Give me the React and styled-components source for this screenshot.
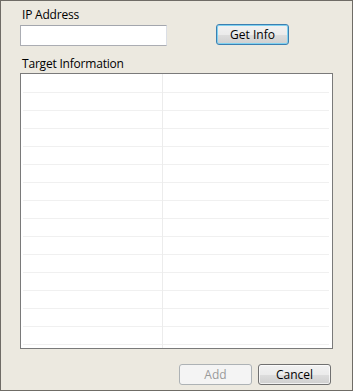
import styled, { createGlobalStyle } from "styled-components";

const Global = createGlobalStyle`
  html, body {
    margin: 0;
    padding: 0;
    background: #ece9e0;
  }
`;

const ROWS = 16;

export default function App() {
  return (
    <>
      <Global />
      <Window>
        <Label>IP Address</Label>
        <InputRow>
          <TextBox />
          <Button $default>Get Info</Button>
        </InputRow>
        <Label $gap>Target Information</Label>
        <Table>
          <Divider />
          {Array.from({ length: ROWS }).map((_, i) => (
            <Row key={i}>
              <Cell />
              <Cell />
            </Row>
          ))}
        </Table>
        <Footer>
          <Button disabled>Add</Button>
          <Button>Cancel</Button>
        </Footer>
      </Window>
    </>
  );
}

const Window = styled.div`
  width: 353px;
  height: 391px;
  box-sizing: border-box;
  border: 1px solid #6f6c66;
  background: #ece9e0;
  padding: 6px 20px 0 19px;
  display: flex;
  flex-direction: column;
  font-family: "Open Sans", "Noto Sans", sans-serif;
  font-size: 12px;
  color: #000;
`;

const Label = styled.div`
  padding-left: 2px;
  line-height: 16px;
  height: 16px;
  margin-top: ${(p) => (p.$gap ? "10px" : "0")};
  letter-spacing: -0.2px;
`;

const InputRow = styled.div`
  display: flex;
  align-items: flex-start;
  gap: 49px;
  margin-top: 2px;
`;

const TextBox = styled.div`
  width: 147px;
  height: 21px;
  box-sizing: border-box;
  background: #fff;
  border: 1px solid #abadb3;
  border-top-color: #a3a6ad;
  border-right-color: #dbdfe6;
`;

const Button = styled.button`
  width: 73px;
  height: 21px;
  box-sizing: border-box;
  margin-top: -1px;
  font-family: inherit;
  font-size: 12px;
  padding: 0;
  border-radius: 3px;
  color: #000;
  border: 1px solid ${(p) => (p.$default ? "#3c7fb1" : "#707070")};
  background: linear-gradient(
    #f2f2f2 0%,
    #ebebeb 50%,
    #dddddd 51%,
    #cfcfcf 100%
  );
  box-shadow: inset 0 0 0 1px
    ${(p) => (p.$default ? "#7fd1f0" : "rgba(255,255,255,0.7)")};

  &:disabled {
    color: #9a9a9a;
    border-color: #adb2b5;
    background: #f4f4f4;
    box-shadow: none;
  }
`;

const Table = styled.div`
  position: relative;
  margin-top: 1px;
  width: 313px;
  height: 276px;
  box-sizing: border-box;
  border: 1px solid #7a7a7a;
  background: #fff;
  padding: 1px 3px 0 2px;
  overflow: hidden;
`;

const Divider = styled.div`
  position: absolute;
  top: 0;
  bottom: 0;
  left: 141px;
  width: 1px;
  background: #ececec;
`;

const Row = styled.div`
  display: grid;
  grid-template-columns: 140px 1fr;
  height: 18px;
  box-sizing: border-box;
  border-bottom: 1px solid #f0f0f0;
`;

const Cell = styled.div`
  padding: 0 4px;
`;

const Footer = styled.div`
  display: flex;
  justify-content: flex-end;
  gap: 6px;
  margin-top: 16px;
  padding-right: 1px;
`;
